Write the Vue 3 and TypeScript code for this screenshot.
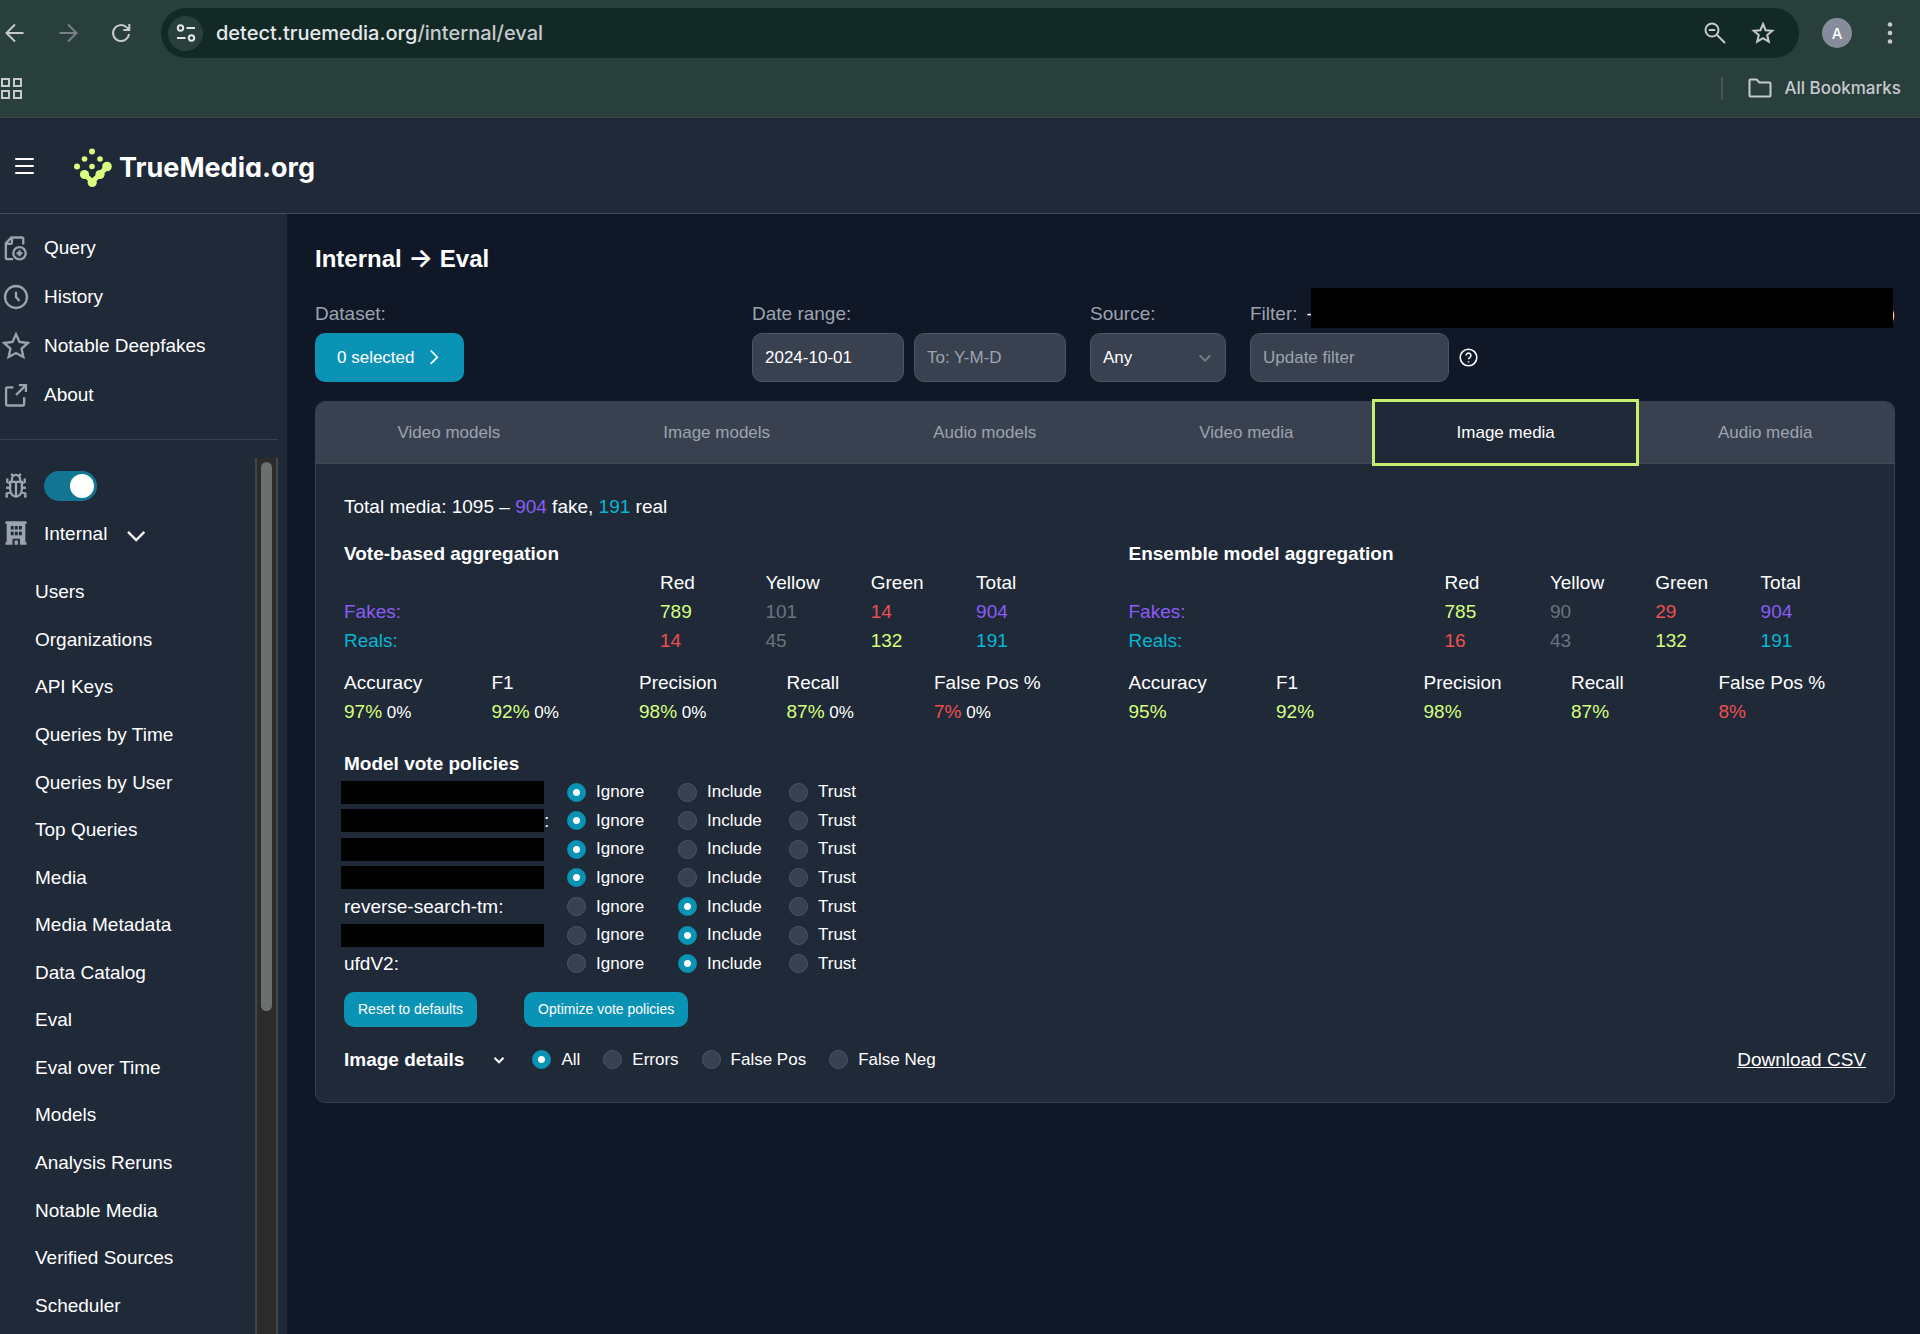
<script setup lang="ts">
import { ref } from 'vue'

interface Cell { value: string; tone: string }
interface CountRow { label: string; tone: string; cells: Cell[] }
interface Metric { name: string; value: string; tone: string; delta?: string }
interface Aggregation { title: string; rows: CountRow[]; metrics: Metric[] }
interface Policy { id: string; name: string; hidden: boolean; suffix: string; vote: string }

const mainLinks = [
  { label: 'Query', icon: 'query' },
  { label: 'History', icon: 'history' },
  { label: 'Notable Deepfakes', icon: 'star' },
  { label: 'About', icon: 'about' },
]

const internalLinks = [
  'Users', 'Organizations', 'API Keys', 'Queries by Time', 'Queries by User', 'Top Queries',
  'Media', 'Media Metadata', 'Data Catalog', 'Eval', 'Eval over Time', 'Models',
  'Analysis Reruns', 'Notable Media', 'Verified Sources', 'Scheduler',
]

const tabs = ['Video models', 'Image models', 'Audio models', 'Video media', 'Image media', 'Audio media']
const activeTab = ref('Image media')
const debug = ref(true)
const dateFrom = ref('2024-10-01')
const dateTo = ref('')
const source = ref('Any')
const filterText = ref('')

const countRows = (fakes: string[], reals: string[]): CountRow[] => [
  {
    label: 'Fakes:', tone: 'purple',
    cells: fakes.map((value, i) => ({ value, tone: ['lime', 'dim', 'red', 'purple'][i] })),
  },
  {
    label: 'Reals:', tone: 'cyan',
    cells: reals.map((value, i) => ({ value, tone: ['red', 'dim', 'lime', 'cyan'][i] })),
  },
]

const aggregations: Aggregation[] = [
  {
    title: 'Vote-based aggregation',
    rows: countRows(['789', '101', '14', '904'], ['14', '45', '132', '191']),
    metrics: [
      { name: 'Accuracy', value: '97%', tone: 'lime', delta: '0%' },
      { name: 'F1', value: '92%', tone: 'lime', delta: '0%' },
      { name: 'Precision', value: '98%', tone: 'lime', delta: '0%' },
      { name: 'Recall', value: '87%', tone: 'lime', delta: '0%' },
      { name: 'False Pos %', value: '7%', tone: 'red', delta: '0%' },
    ],
  },
  {
    title: 'Ensemble model aggregation',
    rows: countRows(['785', '90', '29', '904'], ['16', '43', '132', '191']),
    metrics: [
      { name: 'Accuracy', value: '95%', tone: 'lime' },
      { name: 'F1', value: '92%', tone: 'lime' },
      { name: 'Precision', value: '98%', tone: 'lime' },
      { name: 'Recall', value: '87%', tone: 'lime' },
      { name: 'False Pos %', value: '8%', tone: 'red' },
    ],
  },
]

const votes = ['Ignore', 'Include', 'Trust']
const policies = ref<Policy[]>([
  { id: 'm1', name: '', hidden: true, suffix: '', vote: 'Ignore' },
  { id: 'm2', name: '', hidden: true, suffix: ':', vote: 'Ignore' },
  { id: 'm3', name: '', hidden: true, suffix: '', vote: 'Ignore' },
  { id: 'm4', name: '', hidden: true, suffix: '', vote: 'Ignore' },
  { id: 'm5', name: 'reverse-search-tm:', hidden: false, suffix: '', vote: 'Include' },
  { id: 'm6', name: '', hidden: true, suffix: '', vote: 'Include' },
  { id: 'm7', name: 'ufdV2:', hidden: false, suffix: '', vote: 'Include' },
])

const detailModes = ['All', 'Errors', 'False Pos', 'False Neg']
const detailMode = ref('All')
</script>

<template>
  <div class="window">
    <div class="browser">
      <div class="toolbar">
        <button class="icon-btn" type="button" aria-label="Back">
          <svg viewBox="0 0 24 24"><path d="M20.5 12H4M12 3.500 3.500 12l8.500 8.500" /></svg>
        </button>
        <button class="icon-btn faded" type="button" aria-label="Forward">
          <svg viewBox="0 0 24 24"><path d="M3.500 12H20M12 3.500 20.500 12 12 20.500" /></svg>
        </button>
        <button class="icon-btn" type="button" aria-label="Reload">
          <svg viewBox="0 0 24 24"><path d="M20 13a8 8 0 1 1-2.300-6.600L20 8.500M20.300 3v6h-6" /></svg>
        </button>
        <div class="address">
          <button class="site-info" type="button" aria-label="Site information">
            <svg viewBox="0 0 24 24"><circle cx="6.500" cy="7" r="2.700" /><path d="M12.500 7H21M3 17h8.500" /><circle cx="17.500" cy="17" r="2.700" /></svg>
          </button>
          <span class="url">detect.truemedia.org<span class="path">/internal/eval</span></span>
          <button class="icon-btn" type="button" aria-label="Zoom">
            <svg viewBox="0 0 24 24"><circle cx="9" cy="9" r="6.500" /><path d="M5.800 9h6.400M14 14l8 8" /></svg>
          </button>
          <button class="icon-btn" type="button" aria-label="Bookmark this tab">
            <svg viewBox="0 0 24 24"><path d="m12 3 2.600 6.200 6.700.5-5.100 4.400 1.600 6.500-5.800-3.500-5.800 3.500 1.600-6.500-5.100-4.400 6.700-.5z" /></svg>
          </button>
        </div>
        <button class="avatar" type="button">A</button>
        <button class="icon-btn" type="button" aria-label="Menu">
          <svg viewBox="0 0 24 24" class="solid"><circle cx="12" cy="3.500" r="2.300" /><circle cx="12" cy="12" r="2.300" /><circle cx="12" cy="20.500" r="2.300" /></svg>
        </button>
      </div>
      <div class="bookmarks">
        <button class="icon-btn" type="button" aria-label="Apps">
          <svg viewBox="0 0 24 24"><path d="M2 3h7v7H2zM14 3h7v7h-7zM2 15h7v7H2zM14 15h7v7h-7z" /></svg>
        </button>
        <div class="all-bookmarks">
          <svg viewBox="0 0 26 24"><path d="M2.500 4.500a1 1 0 0 1 1-1H9.500l3 3H22.500a1 1 0 0 1 1 1V19.500a1 1 0 0 1-1 1H3.500a1 1 0 0 1-1-1z" /></svg>
          <span>All Bookmarks</span>
        </div>
      </div>
    </div>

    <header class="site-header">
      <button class="menu-btn" type="button" aria-label="Toggle sidebar"><i></i><i></i><i></i></button>
      <a class="brand" href="#">
        <svg viewBox="0 0 38 40" aria-hidden="true">
          <circle cx="18" cy="3.500" r="3" /><circle cx="10.500" cy="11" r="2.800" /><circle cx="26" cy="11" r="2.800" />
          <circle cx="3" cy="18.500" r="3" /><circle cx="18" cy="18.500" r="2.800" />
          <circle cx="33" cy="18.500" r="4.800" /><circle cx="10.500" cy="26.500" r="4.600" />
          <circle cx="26" cy="26.500" r="4.600" /><circle cx="18.200" cy="34.500" r="4.600" />
          <path d="M33 18.500 26 26.500 18.200 33.500 10.500 26.500" />
        </svg>
        <span>TrueMedia.org</span>
      </a>
    </header>

    <div class="body">
      <aside class="sidebar">
        <nav class="main-nav">
          <a v-for="link in mainLinks" :key="link.label" href="#" class="nav-item">
            <svg v-if="link.icon === 'query'" viewBox="0 0 24 24"><path d="M9.500 21.500H4.500a1.200 1.200 0 0 1-1.200-1.200V8L8 3h9a1.200 1.200 0 0 1 1.200 1.200V9M8.500 3v4.500a1 1 0 0 1-1 1H3.500M15 14v5M12.500 16.500h5" /><circle cx="15" cy="16.500" r="5.300" /></svg>
            <svg v-else-if="link.icon === 'history'" viewBox="0 0 24 24"><circle cx="12" cy="12" r="9.400" /><path d="M12 7.500V12l3 3.500" /></svg>
            <svg v-else-if="link.icon === 'star'" viewBox="0 0 24 24"><path d="m12 2 3 6.600 7.200.8-5.400 4.900 1.500 7.200L12 18l-6.300 3.500 1.500-7.200L1.800 9.400 9 8.600z" /></svg>
            <svg v-else viewBox="0 0 24 24"><path d="M19 14v5.800a1.200 1.200 0 0 1-1.200 1.200H4.700a1.200 1.200 0 0 1-1.200-1.200V6.700a1.200 1.200 0 0 1 1.200-1.200h5M14.500 3.500H20.500v6M12 12l8.300-8.300" /></svg>
            {{ link.label }}
          </a>
        </nav>
        <div class="scroll-area">
          <div class="scroll-content">
            <div class="nav-item toggle-row">
              <svg viewBox="0 0 24 24"><path d="M8.500 7.500V6a3.500 3.500 0 0 1 7 0v1.500M8 1.500l1.500 2M16 1.500l-1.500 2M12 8.500v12.500M7 8.500h10v6.500a5 6 0 0 1-10 0zM7 13.500H3.500M20.500 13.500H17M7 9.500 4.500 8.500V5.500M17 9.500l2.500-1V5.500M7.500 17 4 18.500V22M16.500 17l3.500 1.500V22" /></svg>
              <input v-model="debug" type="checkbox" class="switch" aria-label="Debug mode" />
            </div>
            <button class="nav-item internal" type="button">
              <svg viewBox="0 0 24 24" class="building"><path fill-rule="evenodd" d="M3 2h18v2.200h-1V20h1v2H3v-2h1V4.200H3zM7.500 6v3h2.500V6zM11 6v3h2.500V6zM14.500 6v3H17V6zM7.500 11v3h2.500v-3zM11 11v3h2.500v-3zM14.500 11v3H17v-3zM9 22h1.800v-3.500h2.800V22h1.800v-5H9z" /></svg>
              Internal
              <svg viewBox="0 0 24 24" class="chev"><path d="m6 11 7 7 7-7" /></svg>
            </button>
            <nav class="sub-nav">
              <a v-for="item in internalLinks" :key="item" href="#">{{ item }}</a>
            </nav>
          </div>
          <div class="scrollbar" aria-hidden="true"><div class="thumb"></div></div>
        </div>
      </aside>

      <main class="content">
        <h1>Internal <span class="arrow">→</span> Eval</h1>

        <form class="filters" @submit.prevent>
          <div class="field dataset">
            <span class="label">Dataset:</span>
            <button class="btn select-btn" type="button">
              0 selected
              <svg viewBox="0 0 24 24"><path d="m8 3 8 8-8 8" /></svg>
            </button>
          </div>
          <div class="field">
            <label class="label" for="date-from">Date range:</label>
            <div class="pair">
              <input id="date-from" v-model="dateFrom" type="text" class="date" />
              <input v-model="dateTo" type="text" class="date" placeholder="To: Y-M-D" aria-label="End date" />
            </div>
          </div>
          <div class="field">
            <label class="label" for="source">Source:</label>
            <div class="select-wrap">
              <select id="source" v-model="source"><option>Any</option></select>
              <svg viewBox="0 0 24 24"><path d="m4 8 8 8 8-8" /></svg>
            </div>
          </div>
          <div class="field filter">
            <div class="label filter-label">
              <label for="filter">Filter:</label>
              <span class="expr">-</span><span class="mask"></span><span class="expr">)</span>
            </div>
            <div class="pair">
              <input id="filter" v-model="filterText" type="text" class="filter-input" placeholder="Update filter" />
              <button class="help" type="button" aria-label="Filter help">
                <svg viewBox="0 0 24 24"><circle cx="12" cy="12" r="10.500" /><path d="M9 9.500a3 3 0 1 1 4.600 2.500c-1 .7-1.600 1.100-1.600 2.300M12 16.700v1.600" /></svg>
              </button>
            </div>
          </div>
        </form>

        <section class="panel">
          <div class="tabs" role="tablist">
            <button
              v-for="tab in tabs" :key="tab" type="button" role="tab"
              :class="{ active: tab === activeTab }" :aria-selected="tab === activeTab"
              @click="activeTab = tab"
            >{{ tab }}</button>
          </div>
          <div class="panel-body">
            <p class="totals">Total media: 1095 – <span class="purple">904</span> fake, <span class="cyan">191</span> real</p>

            <div class="aggregations">
              <section v-for="agg in aggregations" :key="agg.title">
                <h2>{{ agg.title }}</h2>
                <table class="counts">
                  <thead>
                    <tr><td colspan="3"></td><th>Red</th><th>Yellow</th><th>Green</th><th>Total</th></tr>
                  </thead>
                  <tbody>
                    <tr v-for="row in agg.rows" :key="row.label">
                      <th colspan="3" :class="row.tone">{{ row.label }}</th>
                      <td v-for="(cell, i) in row.cells" :key="i" :class="cell.tone">{{ cell.value }}</td>
                    </tr>
                  </tbody>
                </table>
                <table class="metrics">
                  <thead>
                    <tr><th v-for="m in agg.metrics" :key="m.name">{{ m.name }}</th></tr>
                  </thead>
                  <tbody>
                    <tr>
                      <td v-for="m in agg.metrics" :key="m.name">
                        <span :class="m.tone">{{ m.value }}</span><small v-if="m.delta">&nbsp;{{ m.delta }}</small>
                      </td>
                    </tr>
                  </tbody>
                </table>
              </section>
            </div>

            <h2 class="policy-title">Model vote policies</h2>
            <div class="policies">
              <div v-for="p in policies" :key="p.id" class="policy" role="radiogroup">
                <span class="policy-name"><span v-if="p.hidden" class="bar"></span>{{ p.name }}{{ p.suffix }}</span>
                <label v-for="v in votes" :key="v" class="choice">
                  <input v-model="p.vote" type="radio" :name="p.id" :value="v" />{{ v }}
                </label>
              </div>
            </div>

            <div class="actions">
              <button class="btn small" type="button">Reset to defaults</button>
              <button class="btn small" type="button">Optimize vote policies</button>
            </div>

            <div class="details">
              <h2>Image details</h2>
              <button class="expand" type="button" aria-label="Expand image details">
                <svg viewBox="0 0 24 24"><path d="m3 7.500 9 9 9-9" /></svg>
              </button>
              <div class="modes" role="radiogroup" aria-label="Image details">
                <label v-for="mode in detailModes" :key="mode" class="choice">
                  <input v-model="detailMode" type="radio" name="details" :value="mode" />{{ mode }}
                </label>
              </div>
              <a class="download" href="#">Download CSV</a>
            </div>
          </div>
        </section>
      </main>
    </div>
  </div>
</template>

<style>
body {
  margin: 0;
  background: #101726;
}
</style>

<style scoped>
.window {
  display: flex;
  flex-direction: column;
  height: 100vh;
  overflow: hidden;
  color: #fff;
  font: 19px/29px "Liberation Sans", Arial, sans-serif;
}
*, *::before { box-sizing: border-box; }
button { padding: 0; border: 0; background: none; color: inherit; font: inherit; }
svg { display: block; flex: none; fill: none; stroke: currentColor; stroke-width: 2; }
h1, h2, p { margin: 0; }
a { color: inherit; text-decoration: none; }

.purple { color: #8b5cf6; }
.cyan { color: #06b6d4; }
.lime { color: #d6ff7f; }
.red { color: #ef4f4f; }
.dim { color: #6b7280; }

/* Browser chrome */
.browser {
  flex: none;
  background: #283f3b;
  border-bottom: 1px solid #3d4341;
  color: #c7c9d0;
  font-family: Inter, sans-serif;
  font-weight: 500;
}
.toolbar {
  display: flex;
  align-items: center;
  height: 66px;
  padding: 0 18px 0 3px;
}
.icon-btn svg { width: 24px; height: 24px; }
.toolbar > .icon-btn + .icon-btn { margin-left: 29px; }
.faded { color: #7a8089; }
.solid { fill: currentColor; stroke: none; }
.address {
  display: flex;
  flex: 1;
  align-items: center;
  gap: 24px;
  height: 50px;
  margin: 0 23px 0 28px;
  padding: 0 24px 0 7px;
  border-radius: 25px;
  background: #122926;
}
.site-info {
  display: grid;
  place-items: center;
  width: 35px;
  height: 35px;
  margin-right: -11px;
  border-radius: 50%;
  background: #283f3b;
  color: #e3e5e8;
}
.site-info svg { width: 24px; height: 24px; }
.url { flex: 1; color: #e6e8eb; font-size: 20px; }
.path { color: #c7cacf; }
.avatar {
  width: 30px;
  height: 30px;
  margin-right: 26px;
  border-radius: 50%;
  background: #868c99;
  color: #fff;
  font-size: 15px;
}
.bookmarks {
  display: flex;
  justify-content: space-between;
  align-items: center;
  height: 51px;
  padding: 0 19px 7px 0;
}
.all-bookmarks {
  display: flex;
  align-items: center;
  gap: 11px;
  height: 23px;
  padding-left: 24px;
  border-left: 2px solid #4b5059;
  font-size: 17px;
}
.all-bookmarks svg { width: 26px; height: 24px; }

/* Site header */
.site-header {
  display: flex;
  flex: none;
  align-items: center;
  gap: 40px;
  height: 96px;
  padding: 0 15px;
  background: #202938;
  border-bottom: 1px solid #414b59;
}
.menu-btn { display: grid; gap: 5px; width: 19px; }
.menu-btn i { height: 2px; border-radius: 1px; background: #fff; }
.brand {
  display: flex;
  align-items: center;
  gap: 7px;
  padding-top: 5px;
  font: 700 27px/40px Inter, sans-serif;
  font-feature-settings: "cv11";
}
.brand svg { width: 38px; height: 40px; fill: #d8ff7d; stroke: none; }
.brand path { fill: none; stroke: #d8ff7d; stroke-width: 5; }

/* Sidebar */
.body { display: flex; flex: 1; min-height: 0; }
.sidebar {
  display: flex;
  flex: none;
  flex-direction: column;
  width: 287px;
  padding-right: 9px;
  background: #202938;
}
.main-nav {
  padding: 9px 0 20px;
  border-bottom: 1px solid #374151;
}
.nav-item {
  display: flex;
  align-items: center;
  gap: 14px;
  height: 49px;
  padding-left: 2px;
}
.nav-item svg { width: 28px; height: 28px; color: #9ca3af; }
.scroll-area { display: flex; flex: 1; min-height: 0; margin-top: 18px; }
.scroll-content { flex: 1; overflow: hidden; }
.toggle-row { height: 56px; }
.nav-item .building { fill: currentColor; stroke: none; }
.internal { height: 38px; }
.nav-item .chev { width: 28px; height: 28px; color: #fff; }
.switch {
  appearance: none;
  width: 53px;
  height: 30px;
  margin: 0;
  padding: 3px;
  border-radius: 15px;
  background: #127693;
}
.switch::before {
  content: "";
  display: block;
  width: 24px;
  height: 24px;
  margin-left: 23px;
  border-radius: 50%;
  background: #fff;
}
.sub-nav {
  display: grid;
  grid-auto-rows: 1fr;
  align-items: center;
  min-height: 761px;
  margin-top: 16px;
  padding-left: 35px;
}
.scrollbar {
  width: 23px;
  padding: 4px 4px 0;
  border: solid #414948;
  border-width: 0 2px;
  background: #2b2b2b;
}
.thumb { height: 63%; border-radius: 6px; background: #6b6f6f; }

/* Content */
.content { flex: 1; min-width: 0; padding: 31px 25px 0 28px; background: #101726; }
h1 { font-size: 24px; line-height: 28px; }
.arrow { font: 600 26px/0 Inter, sans-serif; }
.filters { display: flex; gap: 24px; margin: 26px 0 19px; }
.field { flex: none; }
.dataset { flex: 413 1 0; }
.filter { flex: 645 1 0; }
.label { display: block; margin-bottom: 5px; color: #9ca3af; }
.btn { border-radius: 10px; background: #0b93b5; color: #fff; }
.select-btn {
  display: flex;
  align-items: center;
  gap: 9px;
  height: 49px;
  padding: 0 20px 0 22px;
  font-size: 17px;
}
.select-btn svg { width: 20px; height: 20px; }
.pair { display: flex; align-items: center; gap: 10px; }
input[type="text"], select {
  height: 49px;
  padding: 0 12px;
  border: 1px solid #4b5563;
  border-radius: 10px;
  background: #394150;
  color: #fff;
  font: 17px/24px "Liberation Sans", Arial, sans-serif;
}
input::placeholder { color: #9ca3af; opacity: 1; }
.date { width: 152px; }
.select-wrap { position: relative; }
select { display: block; appearance: none; width: 136px; }
.select-wrap svg {
  position: absolute;
  top: 17px;
  right: 13px;
  width: 16px;
  height: 16px;
  color: #747c8a;
  stroke-width: 3;
  pointer-events: none;
}
.filter-input { width: 199px; }
.help svg { width: 19px; height: 19px; }
.filter-label { display: flex; height: 29px; align-items: flex-end; }
.expr { color: #fff; }
label + .expr { margin-left: 9px; }
.mask { z-index: 1; flex: 1; height: 40px; margin: 0 -4px 0 -2px; background: #000; }

.panel { border: 1px solid #374151; border-radius: 10px; background: #202938; }
.tabs {
  display: flex;
  height: 62px;
  border-bottom: 1px solid #414957;
  border-radius: 9px 9px 0 0;
  background: #394150;
  color: #9ca3af;
  font-size: 17px;
}
.tabs button { flex: 1 1 auto; }
.tabs .active { outline: 3px solid #c3ee70; background: #202938; color: #fff; }
.panel-body { padding: 28px; }
h2 { font-size: 19px; line-height: 29px; }
.aggregations {
  display: grid;
  grid-template-columns: 1fr 1fr;
  gap: 47px;
  margin: 18px 0 22px;
}
table { width: 100%; border-collapse: collapse; table-layout: fixed; }
th, td { padding: 0; text-align: left; font-weight: 400; }
.counts { margin-bottom: 13px; }
.counts tr { height: 29px; }
small { font-size: 17px; }

.policies {
  display: grid;
  grid-auto-rows: 1fr;
  min-height: 200px;
}
.policy { display: grid; grid-template-columns: 223px repeat(3, 111px); align-items: center; line-height: 28px; }
.policy-name { display: flex; align-items: center; height: 28px; }
.bar { width: 203px; height: 23px; margin: 0 0 0 -3px; background: #000; }
.choice { display: flex; align-items: center; gap: 10px; font-size: 17px; }
input[type="radio"] {
  appearance: none;
  flex: none;
  width: 19px;
  height: 19px;
  margin: 0;
  border: 1px solid #4b5563;
  border-radius: 50%;
  background: #394150;
}
input[type="radio"]:checked {
  border-color: #0b93b5;
  background: radial-gradient(circle, #fff 3px, #0b93b5 4px);
}
.actions { display: flex; gap: 47px; margin: 14px 0 18px; }
.small { height: 35px; padding: 0 14px; font-size: 14px; }
.details { display: flex; align-items: center; }
.expand { margin: 0 27px 0 29px; }
.expand svg { width: 12px; height: 12px; stroke-width: 4; }
.modes { display: flex; gap: 23px; }
.download { margin-left: auto; text-decoration: underline; }
</style>
